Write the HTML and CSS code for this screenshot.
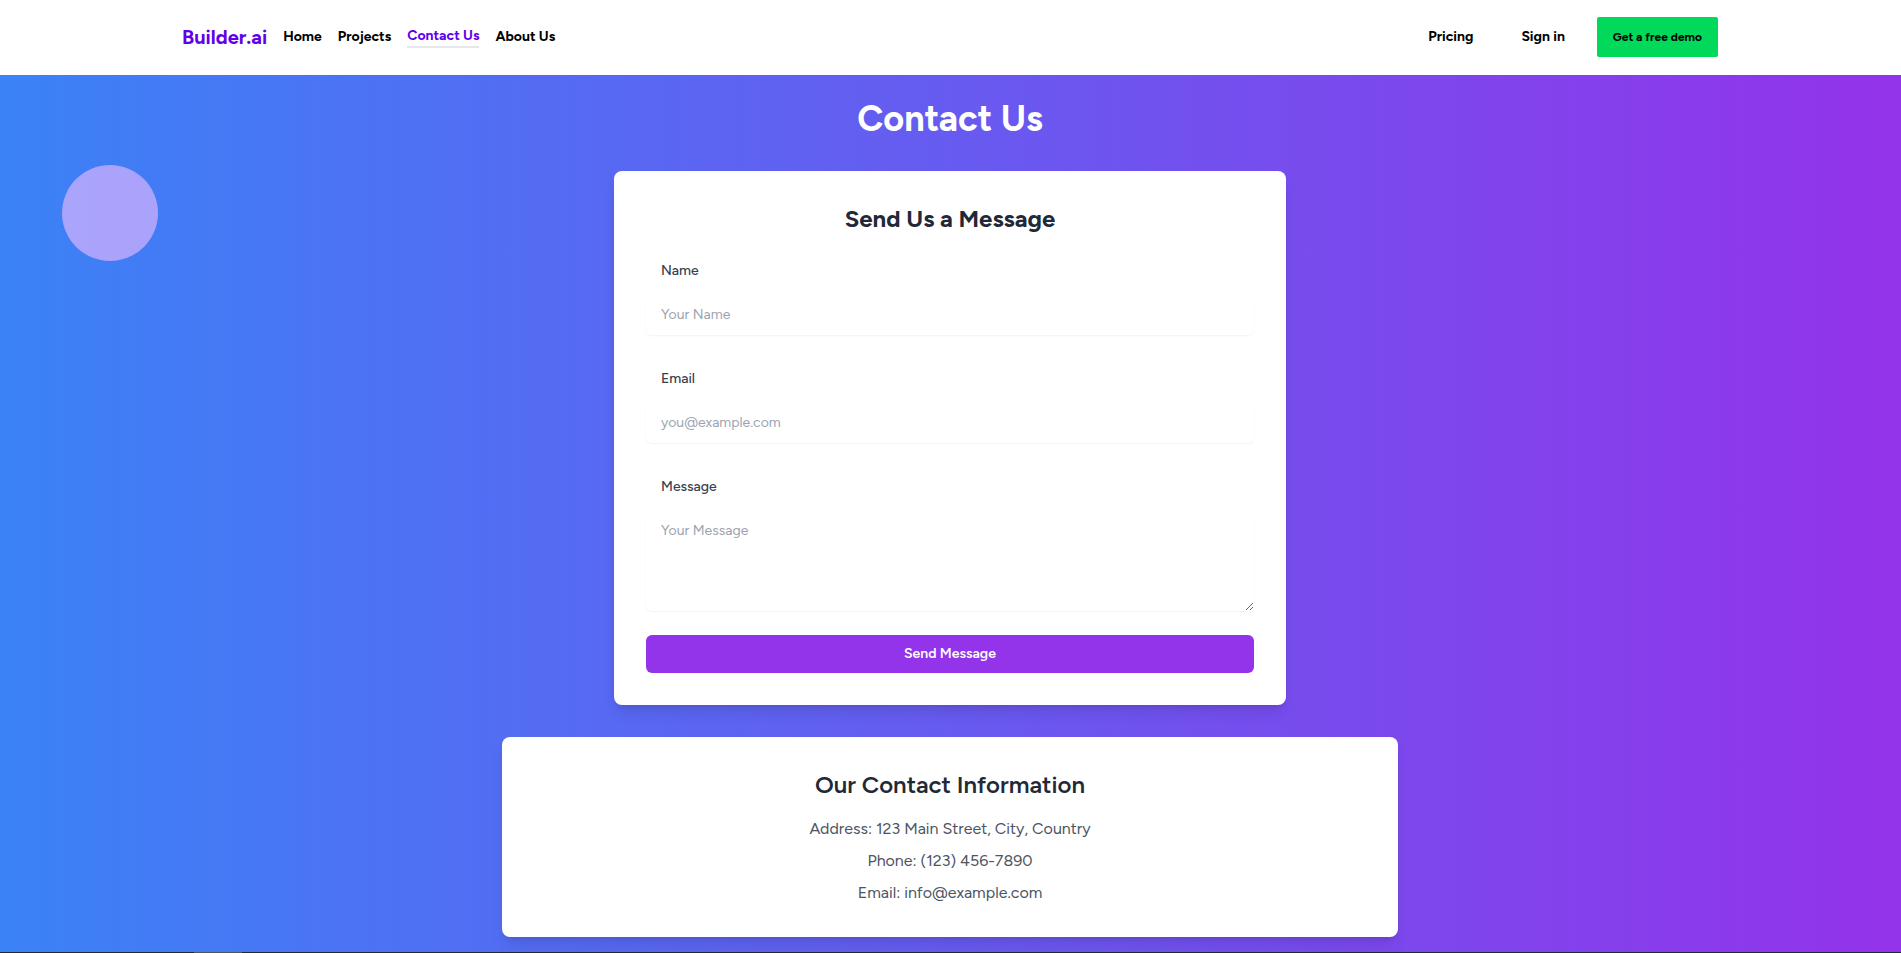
FILE: index.html
```html
<!DOCTYPE html>
<html lang="en">
<head>
  <meta charset="utf-8">
  <meta name="viewport" content="width=device-width, initial-scale=1">
  <title>Contact Us</title>
  <link rel="stylesheet" href="styles.css">
</head>
<body>
  <header class="header">
    <nav class="nav">
      <div class="nav-main">
        <a class="brand" href="#">Builder.ai</a>
        <a class="nav-link" href="#">Home</a>
        <a class="nav-link" href="#">Projects</a>
        <a class="nav-link nav-link-active" href="#" aria-current="page">Contact Us</a>
        <a class="nav-link" href="#">About Us</a>
      </div>
      <div class="nav-side">
        <a class="nav-link" href="#">Pricing</a>
        <a class="nav-link" href="#">Sign in</a>
        <button class="demo-button" type="button">Get a free demo</button>
      </div>
    </nav>
  </header>

  <main class="main">
    <span class="bubble" aria-hidden="true"></span>
    <h1 class="page-title">Contact Us</h1>

    <section class="card card-form">
      <h2 class="card-title card-title-strong">Send Us a Message</h2>
      <form class="form">
        <div class="fields">
          <div class="field">
            <label class="label" for="name">Name</label>
            <input class="control" id="name" type="text" placeholder="Your Name">
          </div>
          <div class="field">
            <label class="label" for="email">Email</label>
            <input class="control" id="email" type="email" placeholder="you@example.com">
          </div>
          <div class="field">
            <label class="label" for="message">Message</label>
            <textarea class="control control-area" id="message" placeholder="Your Message"></textarea>
          </div>
        </div>
        <button class="submit" type="submit">Send Message</button>
      </form>
    </section>

    <section class="card card-info">
      <h2 class="card-title">Our Contact Information</h2>
      <div class="info">
        <p>Address: 123 Main Street, City, Country</p>
        <p>Phone: (123) 456-7890</p>
        <p>Email: info@example.com</p>
      </div>
    </section>
  </main>

  <footer class="footer"><div class="footer-mark"></div></footer>
</body>
</html>
```

FILE: styles.css
```css
*, *::before, *::after { box-sizing: border-box; }

body {
  margin: 0;
  min-height: 100vh;
  display: flex;
  flex-direction: column;
  font-family: Figtree, Lato, "Open Sans", sans-serif;
  font-size: 16px;
  line-height: 24px;
  color: #1f2937;
}

h1, h2, p { margin: 0; }
a { color: inherit; text-decoration: none; }
button, input, textarea { font: inherit; }

.header { background: #fff; padding: 0 17px 1px 16px; }
.nav {
  max-width: 1536px;
  min-height: 74px;
  margin: 0 auto;
  display: flex;
  align-items: center;
  justify-content: space-between;
}
.nav-main { display: flex; align-items: center; gap: 16px; }
.nav-side { display: flex; align-items: center; gap: 48px; }
.brand { font-size: 20px; line-height: 28px; font-weight: 700; color: #6200ea; }
.nav-link { font-size: 14px; line-height: 20px; font-weight: 700; color: #000; }
.nav-link-active { color: #6200ea; border-bottom: 2px solid #e5e7eb; }
.demo-button {
  margin-left: -16px;
  padding: 10px 16px;
  border: 0;
  border-radius: 2px;
  background: #00d95a;
  color: #000;
  font-size: 12px;
  line-height: 20px;
  font-weight: 700;
}

.main {
  position: relative;
  flex: 1;
  display: flex;
  flex-direction: column;
  align-items: center;
  gap: 32px;
  padding: 24px 17px 15px 16px;
  background: linear-gradient(to right, #3b82f6, #9333ea);
}
.bubble {
  position: absolute;
  top: 90px;
  left: 62px;
  width: 96px;
  height: 96px;
  border-radius: 50%;
  background: #d8b4fe;
  opacity: 0.7;
}
.page-title { font-size: 36px; line-height: 40px; font-weight: 700; color: #fff; }

.card {
  width: 100%;
  padding: 32px;
  border-radius: 8px;
  background: #fff;
  box-shadow: 0 10px 15px -3px rgba(0, 0, 0, 0.1), 0 4px 6px -4px rgba(0, 0, 0, 0.1);
}
.card-form { max-width: 672px; }
.card-info { max-width: 896px; text-align: center; }
.card-title { font-size: 24px; line-height: 32px; font-weight: 600; text-align: center; }
.card-title-strong { font-weight: 700; }

.form { display: flex; flex-direction: column; gap: 24px; margin-top: 24px; }
.fields { display: flex; flex-direction: column; gap: 32px; }
.field { display: flex; flex-direction: column; gap: 12px; }
.label { padding: 0 15px; font-size: 14px; font-weight: 500; color: #374151; }
.control {
  width: 100%;
  height: 40px;
  padding: 7px 15px 9px;
  border: 0;
  border-radius: 6px;
  background: #fff;
  color: #374151;
  font-size: 14px;
  box-shadow: 0 1px 2px rgba(0, 0, 0, 0.05);
}
.control-area { height: 100px; padding-top: 8px; resize: vertical; }
.control::placeholder { color: #9ca3af; opacity: 1; }
.submit {
  padding: 9px 16px;
  border: 0;
  border-radius: 6px;
  background: #9333ea;
  color: #fff;
  font-size: 14px;
  line-height: 20px;
  font-weight: 600;
}

.info { display: flex; flex-direction: column; gap: 8px; margin-top: 16px; color: #4b5563; }

.footer { background: #1f2937; padding: 0 194px; }
.footer-mark { width: 48px; height: 1px; background: #4b5563; }
```
